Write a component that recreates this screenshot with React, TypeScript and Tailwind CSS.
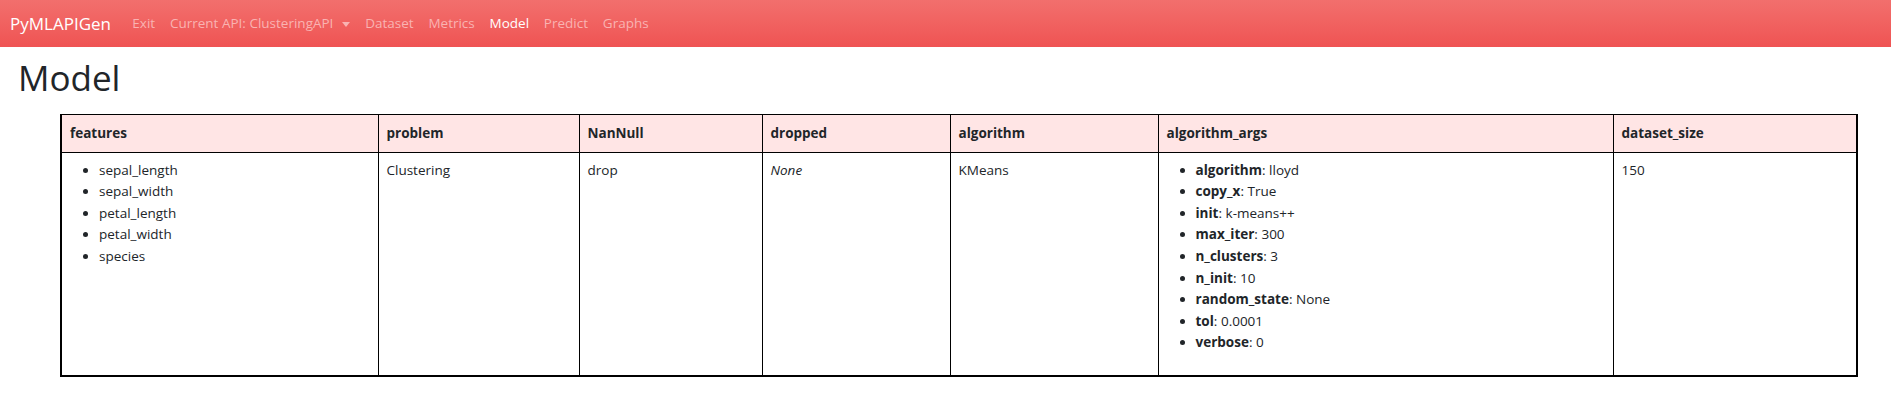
import React from 'react'

const navLinks = [
  { label: 'Exit' },
  { label: 'Current API: ClusteringAPI', dropdown: true },
  { label: 'Dataset' },
  { label: 'Metrics' },
  { label: 'Model', active: true },
  { label: 'Predict' },
  { label: 'Graphs' },
]

const features = ['sepal_length', 'sepal_width', 'petal_length', 'petal_width', 'species']

const algorithmArgs: [string, string][] = [
  ['algorithm', 'lloyd'],
  ['copy_x', 'True'],
  ['init', 'k-means++'],
  ['max_iter', '300'],
  ['n_clusters', '3'],
  ['n_init', '10'],
  ['random_state', 'None'],
  ['tol', '0.0001'],
  ['verbose', '0'],
]

const columns = [
  { name: 'features', width: 'w-[317px]' },
  { name: 'problem', width: 'w-[201px]' },
  { name: 'NanNull', width: 'w-[183px]' },
  { name: 'dropped', width: 'w-[188px]' },
  { name: 'algorithm', width: 'w-[208px]' },
  { name: 'algorithm_args', width: 'w-[455px]' },
  { name: 'dataset_size', width: 'w-[244px]' },
]

function Navbar() {
  return (
    <nav className="h-[47px] flex items-center px-[10px] bg-gradient-to-b from-[#f26f6d] to-[#ef5353]">
      <span className="text-[17px] text-white mr-[14px] leading-none">PyMLAPIGen</span>
      <ul className="flex items-center">
        {navLinks.map((link) => (
          <li key={link.label}>
            <span
              className={
                'flex items-center px-[7.4px] text-[13.5px] ' +
                (link.active ? 'text-white' : 'text-[#f9b3b2]')
              }
            >
              {link.label}
              {link.dropdown && (
                <span className="ml-[9px] mt-[1px] w-0 h-0 border-t-[5px] border-t-[#f9b3b2] border-x-[4.5px] border-x-transparent" />
              )}
            </span>
          </li>
        ))}
      </ul>
    </nav>
  )
}

export default function App() {
  return (
    <div className="min-h-screen bg-white text-[#212529] font-['Open_Sans',sans-serif]">
      <Navbar />

      {/* Title */}
      <div className="px-[18px]">
        <h1 className="text-[35px] font-medium leading-[1.2] mt-[10px] mb-[15px]">Model</h1>
      </div>

      {/* Model table */}
      <table className="ml-[60px] w-[1796px] table-fixed border-collapse border-x-2 border-b-2 border-t border-black text-[13.5px] leading-[21.6px]">
        <thead>
          <tr className="bg-[#ffe5e5]">
            {columns.map((col) => (
              <th
                key={col.name}
                className={col.width + ' border border-black px-[8px] pt-[8px] pb-[7px] text-left font-bold align-top'}
              >
                {col.name}
              </th>
            ))}
          </tr>
        </thead>
        <tbody>
          <tr>
            <td className="border border-black px-[8px] pt-[7px] pb-[7px] align-top">
              <ul className="list-disc pl-[29px] mb-[14px]">
                {features.map((f) => (
                  <li key={f}>{f}</li>
                ))}
              </ul>
            </td>
            <td className="border border-black px-[8px] py-[7px] align-top">Clustering</td>
            <td className="border border-black px-[8px] py-[7px] align-top">drop</td>
            <td className="border border-black px-[8px] py-[7px] align-top italic">None</td>
            <td className="border border-black px-[8px] py-[7px] align-top">KMeans</td>
            <td className="border border-black px-[8px] pt-[7px] pb-[7px] align-top">
              <ul className="list-disc pl-[29px] mb-[14px]">
                {algorithmArgs.map(([k, v]) => (
                  <li key={k}>
                    <b className="font-bold">{k}</b>: {v}
                  </li>
                ))}
              </ul>
            </td>
            <td className="border border-black px-[8px] py-[7px] align-top">150</td>
          </tr>
        </tbody>
      </table>
    </div>
  )
}
